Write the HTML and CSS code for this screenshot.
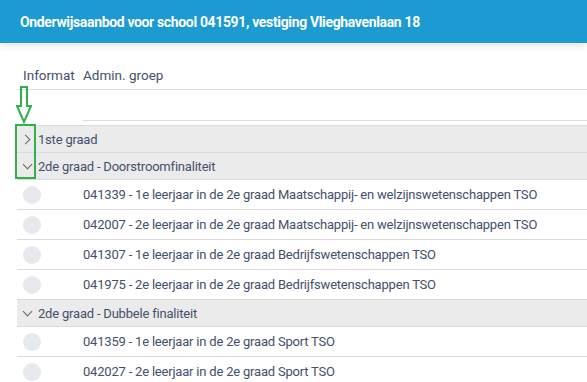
FILE: index.html
```html
<!DOCTYPE html>
<html lang="nl">
<head>
  <meta charset="UTF-8" />
  <title>Onderwijsaanbod</title>
  <link rel="stylesheet" href="styles.css">
</head>
<body>
  <header>Onderwijsaanbod voor school 041591, vestiging Vlieghavenlaan 18</header>
  <main>
    <div class="grid">
      <div class="row head">
        <div class="col1">Informat</div>
        <div class="col2">Admin. groep</div>
      </div>
      <div class="row filter">
        <div class="col1"></div>
        <div class="col2"></div>
      </div>
      <div class="groups">
        <div class="row group">
          <div class="col1"><span class="chev right"></span></div>
          <div class="col2 label">1ste graad</div>
        </div>
        <div class="row group">
          <div class="col1"><span class="chev down"></span></div>
          <div class="col2 label">2de graad - Doorstroomfinaliteit</div>
        </div>
        <div class="row item"><div class="col1"><span class="dot"></span></div><div class="col2">041339 - 1e leerjaar in de 2e graad Maatschappij- en welzijnswetenschappen TSO</div></div>
        <div class="row item"><div class="col1"><span class="dot"></span></div><div class="col2">042007 - 2e leerjaar in de 2e graad Maatschappij- en welzijnswetenschappen TSO</div></div>
        <div class="row item"><div class="col1"><span class="dot"></span></div><div class="col2">041307 - 1e leerjaar in de 2e graad Bedrijfswetenschappen TSO</div></div>
        <div class="row item"><div class="col1"><span class="dot"></span></div><div class="col2">041975 - 2e leerjaar in de 2e graad Bedrijfswetenschappen TSO</div></div>
        <div class="row group">
          <div class="col1"><span class="chev down"></span></div>
          <div class="col2 label">2de graad - Dubbele finaliteit</div>
        </div>
        <div class="row item"><div class="col1"><span class="dot"></span></div><div class="col2">041359 - 1e leerjaar in de 2e graad Sport TSO</div></div>
        <div class="row item"><div class="col1"><span class="dot"></span></div><div class="col2">042027 - 2e leerjaar in de 2e graad Sport TSO</div></div>
      </div>
    </div>

    <!-- annotation -->
    <svg class="arrow" width="16" height="38" viewBox="0 0 16 38">
      <path d="M5 1 H11 V20 H15 L8 36 L1 20 H5 Z" fill="none" stroke="#2fb14c" stroke-width="2" stroke-linejoin="miter"/>
    </svg>
    <div class="mark"></div>
  </main>
</body>
</html>
```

FILE: styles.css
```css
* { box-sizing: border-box; }
html, body {
  margin: 0; padding: 0;
  font-family: Roboto, "Liberation Sans", sans-serif;
  background: #fff; color: #44506b;
}
header {
  height: 43px; padding: 0 20px;
  display: flex; align-items: center;
  background: #1c9ad2; color: #fff;
  font-size: 14px; font-weight: bold; letter-spacing: -0.35px;
  box-shadow: 0 2px 8px rgba(0,0,0,0.12);
  position: relative;
}
main { position: relative; padding: 0 0 0 17px; }
.grid { padding-top: 17px; }
.row { display: flex; font-size: 13px; letter-spacing: -0.2px; }
.col1 { width: 66px; flex: none; padding-left: 6px; display: flex; align-items: center; }
.col2 { flex: 1; display: flex; align-items: center; white-space: nowrap; overflow: hidden; }
.head { height: 30px; border-bottom: 1px solid #dcdcdc; font-size: 13.5px; letter-spacing: 0; }
.filter { height: 31px; }
.filter .col2 { border-bottom: 1px solid #dcdcdc; }
.groups { margin-top: 4px; }
.group {
  height: 27px; background: #ebebeb;
  border-top: 1px solid #dcdcdc;
}
.group .col1 { padding-left: 3px; }
.group .label { margin-left: -45px; }
.item { height: 30px; border-top: 1px solid #dcdcdc; }
.chev {
  width: 7px; height: 7px; margin-left: 4px;
  border-right: 1.6px solid #666; border-bottom: 1.6px solid #666;
}
.chev.right { transform: rotate(-45deg); margin-left: 2px; }
.chev.down { transform: rotate(45deg); margin-top: -4px; }
.dot {
  width: 18px; height: 18px; border-radius: 50%;
  background: #e6e9ed;
}
.arrow { position: absolute; left: 16px; top: 43px; }
.mark {
  position: absolute; left: 15px; top: 81px;
  width: 21px; height: 55px;
  border: 2px solid #2fb14c;
}
```
